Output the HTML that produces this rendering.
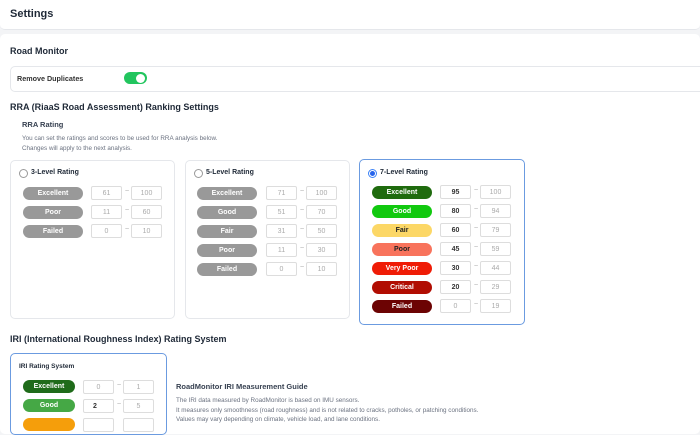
<!DOCTYPE html>
<html><head><style>
body{margin:0;width:700px;height:422px;overflow:hidden;background:#f3f4f6;font-family:"Liberation Sans",sans-serif;color:#1f2937;position:relative}
.a{position:absolute}
.b{font-weight:bold}
.card{position:absolute;background:#fff;border:1px solid #e5e7eb;border-radius:5px}
.pill{position:absolute;width:60px;height:13px;border-radius:7px;background:#999;color:#fff;font-size:7px;font-weight:bold;text-align:center;line-height:13px}
.in{position:absolute;width:31px;height:14px;border:1px solid #ddd;border-radius:2px;background:#fff;font-size:7px;color:#aaa;text-align:center;line-height:14px;box-sizing:border-box}
.tl{position:absolute;font-size:7px;color:#aaa}
.dk{color:#333;font-weight:bold}
.radio{position:absolute;width:7px;height:7px;border:1px solid #999;border-radius:50%;background:#fff}
</style></head><body>
<div class="a" style="left:0;top:0;width:700px;height:29px;background:#fff;border-bottom:1px solid #e5e7eb;border-radius:0 0 5px 5px"></div>
<div class="a b" style="left:10px;top:8px;font-size:11px">Settings</div>
<div class="a" style="left:0;top:34px;width:700px;height:400px;background:#fff;border-radius:5px"></div>
<div class="a b" style="left:10px;top:46px;font-size:9px">Road Monitor</div>
<div class="card" style="left:10px;top:66px;width:700px;height:24px;border-radius:5px"></div>
<div class="a b" style="left:17px;top:74px;font-size:7.2px;color:#333">Remove Duplicates</div>
<div class="a" style="left:124px;top:72px;width:23px;height:12px;border-radius:6px;background:#22c55e"></div>
<div class="a" style="left:136px;top:74px;width:9px;height:9px;border-radius:50%;background:#fff"></div>
<div class="a b" style="left:10px;top:102px;font-size:9px">RRA (RiaaS Road Assessment) Ranking Settings</div>
<div class="a b" style="left:22px;top:120px;font-size:7.5px;color:#374151">RRA Rating</div>
<div class="a" style="left:22px;top:134px;font-size:6.3px;color:#6b7280;line-height:9.5px">You can set the ratings and scores to be used for RRA analysis below.<br>Changes will apply to the next analysis.</div>

<div class="card" style="left:10px;top:160px;width:163px;height:157px"></div>
<div class="radio" style="left:19px;top:169px"></div>
<div class="a b" style="left:31px;top:169px;font-size:7px">3-Level Rating</div>
<div class="pill" style="left:23px;top:187px">Excellent</div><div class="in" style="left:91px;top:186px">61</div><div class="tl" style="left:125px;top:188px">~</div><div class="in" style="left:131px;top:186px">100</div>
<div class="pill" style="left:23px;top:206px">Poor</div><div class="in" style="left:91px;top:205px">11</div><div class="tl" style="left:125px;top:207px">~</div><div class="in" style="left:131px;top:205px">60</div>
<div class="pill" style="left:23px;top:225px">Failed</div><div class="in" style="left:91px;top:224px">0</div><div class="tl" style="left:125px;top:226px">~</div><div class="in" style="left:131px;top:224px">10</div>

<div class="card" style="left:185px;top:160px;width:163px;height:157px"></div>
<div class="radio" style="left:194px;top:169px"></div>
<div class="a b" style="left:206px;top:169px;font-size:7px">5-Level Rating</div>
<div class="pill" style="left:197px;top:187px">Excellent</div><div class="in" style="left:266px;top:186px">71</div><div class="tl" style="left:300px;top:188px">~</div><div class="in" style="left:306px;top:186px">100</div>
<div class="pill" style="left:197px;top:206px">Good</div><div class="in" style="left:266px;top:205px">51</div><div class="tl" style="left:300px;top:207px">~</div><div class="in" style="left:306px;top:205px">70</div>
<div class="pill" style="left:197px;top:225px">Fair</div><div class="in" style="left:266px;top:224px">31</div><div class="tl" style="left:300px;top:226px">~</div><div class="in" style="left:306px;top:224px">50</div>
<div class="pill" style="left:197px;top:244px">Poor</div><div class="in" style="left:266px;top:243px">11</div><div class="tl" style="left:300px;top:245px">~</div><div class="in" style="left:306px;top:243px">30</div>
<div class="pill" style="left:197px;top:263px">Failed</div><div class="in" style="left:266px;top:262px">0</div><div class="tl" style="left:300px;top:264px">~</div><div class="in" style="left:306px;top:262px">10</div>

<div class="card" style="left:359px;top:159px;width:164px;height:164px;border:1.5px solid #6b9be0"></div>
<div class="radio" style="left:368px;top:169px;border-color:#3b82f6"></div><div class="a" style="left:370px;top:171px;width:5px;height:5px;border-radius:50%;background:#2563eb"></div>
<div class="a b" style="left:380px;top:169px;font-size:7px">7-Level Rating</div>
<div class="pill" style="left:372px;top:186px;background:#1f6b0e">Excellent</div><div class="in dk" style="left:440px;top:185px">95</div><div class="tl" style="left:474px;top:187px">~</div><div class="in" style="left:480px;top:185px">100</div>
<div class="pill" style="left:372px;top:205px;background:#11c90f">Good</div><div class="in dk" style="left:440px;top:204px">80</div><div class="tl" style="left:474px;top:206px">~</div><div class="in" style="left:480px;top:204px">94</div>
<div class="pill" style="left:372px;top:224px;background:#fcd766;color:#222">Fair</div><div class="in dk" style="left:440px;top:223px">60</div><div class="tl" style="left:474px;top:225px">~</div><div class="in" style="left:480px;top:223px">79</div>
<div class="pill" style="left:372px;top:243px;background:#f8735c;color:#222">Poor</div><div class="in dk" style="left:440px;top:242px">45</div><div class="tl" style="left:474px;top:244px">~</div><div class="in" style="left:480px;top:242px">59</div>
<div class="pill" style="left:372px;top:262px;background:#ef1c06">Very Poor</div><div class="in dk" style="left:440px;top:261px">30</div><div class="tl" style="left:474px;top:263px">~</div><div class="in" style="left:480px;top:261px">44</div>
<div class="pill" style="left:372px;top:281px;background:#b10d02">Critical</div><div class="in dk" style="left:440px;top:280px">20</div><div class="tl" style="left:474px;top:282px">~</div><div class="in" style="left:480px;top:280px">29</div>
<div class="pill" style="left:372px;top:300px;background:#6c0303">Failed</div><div class="in" style="left:440px;top:299px">0</div><div class="tl" style="left:474px;top:301px">~</div><div class="in" style="left:480px;top:299px">19</div>

<div class="a b" style="left:10px;top:334px;font-size:9px">IRI (International Roughness Index) Rating System</div>
<div class="card" style="left:10px;top:353px;width:155px;height:80px;border:1.5px solid #6b9be0"></div>
<div class="a b" style="left:19px;top:363px;font-size:6.5px">IRI Rating System</div>
<div class="pill" style="left:23px;top:380px;width:52px;background:#1f6b1a">Excellent</div><div class="in" style="left:83px;top:380px">0</div><div class="tl" style="left:117px;top:382px">~</div><div class="in" style="left:123px;top:380px">1</div>
<div class="pill" style="left:23px;top:399px;width:52px;background:#45a845">Good</div><div class="in dk" style="left:83px;top:399px;text-align:left;padding-left:9px">2</div><div class="tl" style="left:117px;top:401px">~</div><div class="in" style="left:123px;top:399px">5</div>
<div class="pill" style="left:23px;top:418px;width:52px;background:#f59e0b"></div><div class="in" style="left:83px;top:418px"></div><div class="in" style="left:123px;top:418px"></div>
<div class="a b" style="left:176px;top:382px;font-size:7.5px;color:#374151">RoadMonitor IRI Measurement Guide</div>
<div class="a" style="left:176px;top:396px;font-size:6.3px;color:#6b7280;line-height:9.5px">The IRI data measured by RoadMonitor is based on IMU sensors.<br>It measures only smoothness (road roughness) and is not related to cracks, potholes, or patching conditions.<br>Values may vary depending on climate, vehicle load, and lane conditions.</div>
</body></html>
